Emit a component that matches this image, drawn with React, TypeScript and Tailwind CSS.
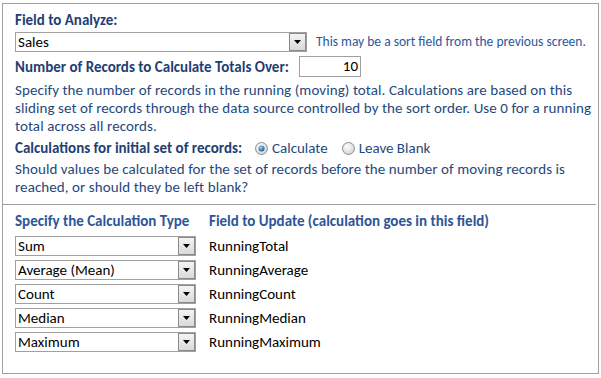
import React from "react";

const font = { fontFamily: "Carlito, Lato, 'Open Sans', sans-serif" };

function DropBtn() {
  return (
    <div className="absolute right-0 top-0 h-full w-[17px] border border-[#8a8a8a] bg-gradient-to-b from-[#f4f4f4] to-[#d9d9d9] flex items-center justify-center">
      <svg width="7" height="4" viewBox="0 0 7 4">
        <path d="M0 0H7L3.5 4Z" fill="#000" />
      </svg>
    </div>
  );
}

function Select({ value, w }: { value: string; w: string }) {
  return (
    <div className={`relative h-[20px] ${w} border border-[#a0a0a0] bg-white text-black text-[15px] leading-[18px] pl-[2px]`}>
      {value}
      <DropBtn />
    </div>
  );
}

function Radio({ on }: { on: boolean }) {
  return (
    <svg width="13" height="13" viewBox="0 0 13 13">
      <defs>
        <radialGradient id={on ? "rg1" : "rg0"} cx="0.4" cy="0.35" r="0.7">
          <stop offset="0" stopColor="#ffffff" />
          <stop offset="1" stopColor="#d0d0d0" />
        </radialGradient>
        <radialGradient id="dot" cx="0.4" cy="0.35" r="0.7">
          <stop offset="0" stopColor="#9fd4ff" />
          <stop offset="1" stopColor="#0b4f8c" />
        </radialGradient>
      </defs>
      <circle cx="6.5" cy="6.5" r="6" fill={`url(#${on ? "rg1" : "rg0"})`} stroke="#8e8f8f" />
      {on && <circle cx="6.5" cy="6.5" r="3" fill="url(#dot)" />}
    </svg>
  );
}

export default function App() {
  const rows = [
    ["Sum", "RunningTotal"],
    ["Average (Mean)", "RunningAverage"],
    ["Count", "RunningCount"],
    ["Median", "RunningMedian"],
    ["Maximum", "RunningMaximum"],
  ];
  return (
    <div className="w-[601px] h-[378px] bg-white pt-[3px] pl-[2px]" style={font}>
      <div className="w-[597px] h-[371px] border border-[#a0a0a0] flex flex-col">
        <div className="mr-[2px] border-b border-[#a0a0a0] pl-[12px] pt-[7px] h-[201px] flex flex-col text-[15px] leading-[18px] text-[#1f497d]">
          <div className="font-bold text-[#1f3f73]">Field to Analyze:</div>
          <div className="mt-[3px] flex items-center gap-[9px]">
            <Select value="Sales" w="w-[292px]" />
            <span className="text-[13.5px] text-[#2b56a0]">This may be a sort field from the previous screen.</span>
          </div>
          <div className="mt-[4px] flex items-center h-[21px]">
            <span className="font-bold text-[#1f3f73] w-[284px]">Number of Records to Calculate Totals Over:</span>
            <div className="h-[21px] w-[62px] border border-[#a0a0a0] text-right pr-[2px] text-black leading-[19px]">10</div>
          </div>
          <p className="mt-[4px] w-[582px] tracking-[0.08px]">
            Specify the number of records in the running (moving) total. Calculations are based on this sliding set of records through the data source controlled by the sort order. Use 0 for a running total across all records.
          </p>
          <div className="mt-[4px] flex items-center h-[18px]">
            <span className="font-bold text-[#1f3f73] w-[240px]">Calculations for initial set of records:</span>
            <Radio on />
            <span className="ml-[4px] mr-[14px]">Calculate</span>
            <Radio on={false} />
            <span className="ml-[4px]">Leave Blank</span>
          </div>
          <p className="mt-[3px] w-[582px] tracking-[0.08px]">
            Should values be calculated for the set of records before the number of moving records is reached, or should they be left blank?
          </p>
        </div>
        <div className="pl-[12px] pt-[7px] flex flex-col text-[15px] leading-[18px]">
          <div className="flex font-bold text-[#2e5597]">
            <span className="w-[194px]">Specify the Calculation Type</span>
            <span>Field to Update (calculation goes in this field)</span>
          </div>
          <div className="mt-[6px] flex flex-col gap-[4px]">
            {rows.map(([a, b]) => (
              <div key={a} className="flex items-center">
                <Select value={a} w="w-[181px]" />
                <span className="ml-[13px] text-black">{b}</span>
              </div>
            ))}
          </div>
        </div>
      </div>
    </div>
  );
}
